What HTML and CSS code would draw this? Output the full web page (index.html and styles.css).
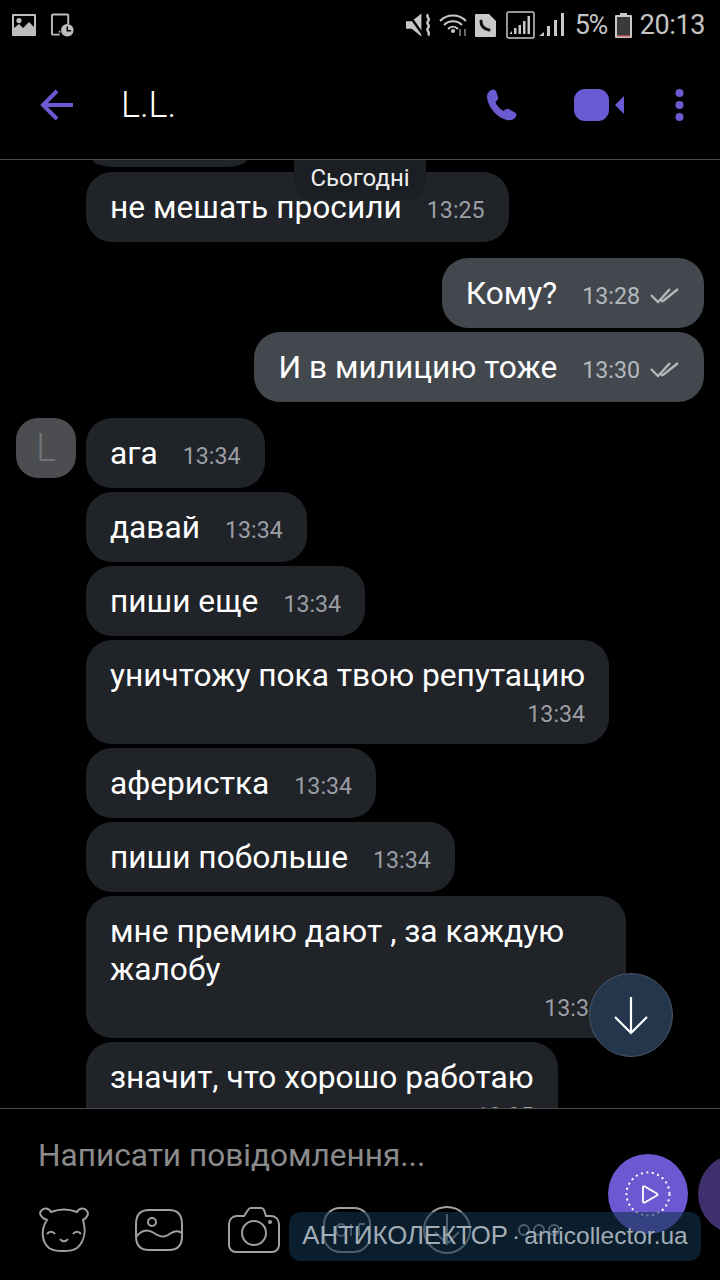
FILE: index.html
```html
<!DOCTYPE html>
<html lang="uk">
<head>
<meta charset="utf-8">
<title>L.L.</title>
<link rel="stylesheet" href="styles.css">
</head>
<body>
<div class="screen">
  <div class="status">
    <div class="status-left">
      <svg class="si-img" viewBox="0 0 24 22"><path fill="#bdbdbd" fill-rule="evenodd" d="M1 0h22a1 1 0 0 1 1 1v20a1 1 0 0 1-1 1H1a1 1 0 0 1-1-1V1a1 1 0 0 1 1-1zM2 2v12l5-4 4 4 6-6 5 5V2zM7 4a2.6 2.6 0 1 1 0 5.200a2.600 2.600 0 0 1 0-5.200z"/></svg>
      <svg class="si-tab" viewBox="0 0 24 24"><path fill="none" stroke="#bdbdbd" stroke-width="2" d="M9 22H2a1 1 0 0 1-1-1V2a1 1 0 0 1 1-1h15a1 1 0 0 1 1 1v9"/><circle cx="17" cy="17.500" r="6.500" fill="#bdbdbd"/><path fill="none" stroke="#000" stroke-width="1.500" d="M17 13.500v4.500h4"/><circle cx="9" cy="19" r="1" fill="#bdbdbd"/></svg>
    </div>
    <div class="status-right">
      <svg class="si-mute" viewBox="0 0 26 24"><path fill="#c8c8c8" d="M0 8h6L16 0v24L6 16H0z"/><path stroke="#000" stroke-width="2.500" d="M2 0l17 24"/><path fill="none" stroke="#c8c8c8" stroke-width="2.500" d="M23 1c-3 3 3 4 0 7s3 4 0 7 3 4 0 8"/></svg>
      <svg class="si-wifi" viewBox="0 0 30 24"><g fill="none" stroke="#c8c8c8" stroke-width="2"><path d="M1 8c7-7.500 19-7.500 26 0"/><path d="M5 12c5-5 13-5 18 0"/><path d="M9 16c3-3 7-3 10 0"/></g><circle cx="14" cy="18" r="2" fill="#c8c8c8"/><path stroke="#888" stroke-width="1.500" d="M21 16v7M26 16v7"/></svg>
      <svg class="si-doc" viewBox="0 0 21 23"><path fill="#c8c8c8" d="M1 0h13l7 7v15a1 1 0 0 1-1 1H1a1 1 0 0 1-1-1V1a1 1 0 0 1 1-1z"/><path fill="none" stroke="#111" stroke-width="3" stroke-linecap="round" d="M6 7c0 5 3 8 8 9"/></svg>
      <svg class="si-box" viewBox="0 0 29 28"><rect x="1" y="1" width="27" height="26" rx="1.500" fill="none" stroke="#c8c8c8" stroke-width="1.500"/><path fill="#c8c8c8" d="M4 22l2-2v3H4zM8 17h2.500v6H8zM12.500 14H15v9h-2.500zM17 10h2.500v13H17zM21.500 5H24v18h-2.500z"/></svg>
      <svg class="si-sig" viewBox="0 0 26 24"><path fill="#c8c8c8" d="M0 23l5-4v4zM8 13h3v10H8zM15 7h3v16h-3zM22 0h3v23h-3z"/></svg>
      <span class="st-pct">5%</span>
      <svg class="si-bat" viewBox="0 0 17 25"><path fill="#c8c8c8" d="M5 0h7v2h4a1 1 0 0 1 1 1v21a1 1 0 0 1-1 1H1a1 1 0 0 1-1-1V3a1 1 0 0 1 1-1h4z"/><rect x="2" y="4" width="13" height="19" fill="#3a3a3a"/><rect x="2" y="22" width="13" height="1.500" fill="#b04a4a"/></svg>
      <span class="st-time">20:13</span>
    </div>
  </div>

  <header class="head">
    <svg class="ic-back" viewBox="0 0 34 32"><path fill="none" stroke="#6b5bd2" stroke-width="4" d="M33 16H4M17 2L3 16l14 14"/></svg>
    <div class="title">L.L.</div>
    <svg class="ic-call" viewBox="0 0 32 32"><path fill="#6b5bd2" d="M5 1c2-1 4-.500 5 1l2 6c.500 1.500 0 2.500-1 3.500l-1.500 1.500c1 3.500 4 7 8 9l2-1.500c1-.800 2.500-1 3.500-.300l6 3.300c1.500 1 1.800 3 .800 4.300-1.500 2.500-4 3.800-7 3.500C12 30 2 19 1 8c-.200-3 1.500-5.500 4-7z"/></svg>
    <svg class="ic-video" viewBox="0 0 50 32"><rect width="35" height="32" rx="11" fill="#6b5bd2"/><path fill="#6b5bd2" d="M41 16l9-9v18z"/></svg>
    <svg class="ic-more" viewBox="0 0 9 32"><g fill="#6b5bd2"><circle cx="4.500" cy="4" r="4"/><circle cx="4.500" cy="16" r="4"/><circle cx="4.500" cy="28" r="4"/></g></svg>
  </header>

  <main class="chat">
    <div class="msgs">
      <div class="clip"></div>
      <div class="row in"><div class="b"><span class="t">не мешать просили</span><span class="m">13:25</span></div></div>
      <div class="row out first"><div class="b o"><span class="t">Кому?</span><span class="m">13:28</span><svg class="ticks" viewBox="0 0 30 16"><path fill="none" stroke="#b4b8bd" stroke-width="2.300" d="M1 7l7 7L20 1M13 13L28 1M11 12l2 2"/></svg></div></div>
      <div class="row out"><div class="b o"><span class="t">И в милицию тоже</span><span class="m">13:30</span><svg class="ticks" viewBox="0 0 30 16"><path fill="none" stroke="#b4b8bd" stroke-width="2.300" d="M1 7l7 7L20 1M13 13L28 1M11 12l2 2"/></svg></div></div>
      <div class="row av first"><div class="avatar">L</div><div class="b"><span class="t">ага</span><span class="m">13:34</span></div></div>
      <div class="row in"><div class="b"><span class="t">давай</span><span class="m">13:34</span></div></div>
      <div class="row in"><div class="b"><span class="t">пиши еще</span><span class="m">13:34</span></div></div>
      <div class="row in"><div class="b col"><span class="t">уничтожу пока твою репутацию</span><span class="m">13:34</span></div></div>
      <div class="row in"><div class="b"><span class="t">аферистка</span><span class="m">13:34</span></div></div>
      <div class="row in"><div class="b"><span class="t">пиши побольше</span><span class="m">13:34</span></div></div>
      <div class="row in"><div class="b col w540"><span class="t">мне премию дают , за каждую жалобу</span><span class="m">13:34</span></div></div>
      <div class="row in"><div class="b col"><span class="t">значит, что хорошо работаю</span><span class="m">13:35</span></div></div>
    </div>
    <div class="date">Сьогодні</div>
    <div class="down"><svg viewBox="0 0 36 40"><path fill="none" stroke="#fff" stroke-width="2.200" d="M18 1v36M2 21l16 16 16-16"/></svg></div>
  </main>

  <footer class="composer">
    <div class="ph">Написати повідомлення...</div>
    <div class="tools">
      <svg class="tool t1" viewBox="0 0 52 46"><g fill="none" stroke="#a0a0a0" stroke-width="2"><path d="M9 13C3 11 0 6 4 3c3-3 8-1 9 2 8-3 18-3 26 0 1-3 6-5 9-2 4 3 1 8-3 10 3 10 2 21-6 28-6 4-22 4-28 0C3 34 3 22 9 13z"/><path d="M9 27c2-3 6-3 8 0M35 27c2-3 6-3 8 0M22 32c2 3 6 3 8 0"/></g></svg>
      <svg class="tool t2" viewBox="0 0 48 42"><g fill="none" stroke="#a0a0a0" stroke-width="2"><path d="M14 1h20c9 0 13 5 13 14v12c0 9-4 14-13 14H14C5 41 1 36 1 27V15C1 6 5 1 14 1z"/><circle cx="17" cy="13" r="4"/><path d="M1 28c6-8 12-8 18-4s10 5 14 2 9-6 14-2"/></g></svg>
      <svg class="tool t3" viewBox="0 0 52 46"><g fill="none" stroke="#a0a0a0" stroke-width="2"><path d="M9 9h7l4-6c.500-1 1.500-2 3-2h10c1.500 0 2.500 1 3 2l2 6h5c4 0 8 3 8 8v21c0 4-3 7-7 7H8c-4 0-7-3-7-7V17c0-5 4-8 8-8z"/><circle cx="26" cy="26" r="12"/></g><circle cx="42" cy="15" r="2" fill="#a0a0a0"/></svg>
      <svg class="tool t4" viewBox="0 0 48 46"><rect x="1" y="1" width="46" height="44" rx="16" fill="none" stroke="#a0a0a0" stroke-width="2"/><path fill="none" stroke="#a0a0a0" stroke-width="1.800" d="M18 17a5 6 0 1 0 0 12a5 6 0 1 0 0-12M28 17v12M36 17v12M36 17h6"/></svg>
      <svg class="tool t5" viewBox="0 0 48 48"><circle cx="24" cy="24" r="23" fill="none" stroke="#a0a0a0" stroke-width="2"/><path fill="none" stroke="#a0a0a0" stroke-width="2" d="M24 8v30M12 26l12 12 12-12"/></svg>
      <svg class="tool t6" viewBox="0 0 42 12"><g fill="none" stroke="#a0a0a0" stroke-width="2"><circle cx="6" cy="6" r="5"/><circle cx="21" cy="6" r="5"/><circle cx="36" cy="6" r="5"/></g></svg>
    </div>
    <div class="send"><svg viewBox="0 0 46 46"><circle cx="23" cy="23" r="21.500" fill="none" stroke="#fff" stroke-width="2" stroke-dasharray="2 3.500"/><path fill="none" stroke="#fff" stroke-width="1.800" stroke-linejoin="round" d="M18 15.500v15c0 1 .800 1.500 1.800 1l12-7c1-.500 1-1.500 0-2l-12-7c-1-.500-1.800 0-1.800 1z"/></svg></div>
    <div class="send2"></div>
    <div class="mark"><span class="mark-a">АНТИКОЛЕКТОР</span> · <span class="mark-b">anticollector.ua</span></div>
  </footer>
</div>
</body>
</html>
```
FILE: styles.css
```css
* { box-sizing: border-box; }
html, body { margin: 0; padding: 0; background: #000; }
body { font-family: Roboto, "Noto Sans", sans-serif; color: #fff; }
.screen { width: 720px; height: 1280px; display: flex; flex-direction: column; overflow: hidden; background: #000; }

.status { height: 50px; display: flex; justify-content: space-between; align-items: center; padding: 0 15px 0 12px; flex: none; }
.status-left, .status-right { display: flex; align-items: center; }
.si-img { width: 24px; height: 22px; }
.si-tab { width: 23px; height: 24px; margin-left: 15px; }
.si-mute { width: 25px; height: 24px; }
.si-wifi { width: 30px; height: 24px; margin-left: 8px; }
.si-doc { width: 21px; height: 23px; margin-left: 6px; }
.si-box { width: 29px; height: 28px; margin-left: 10px; }
.si-sig { width: 26px; height: 24px; margin-left: 4px; }
.st-pct { font-size: 27px; color: #c4c4c4; margin-left: 10px; letter-spacing: -1.5px; }
.si-bat { width: 17px; height: 25px; margin-left: 8px; }
.st-time { font-size: 27px; color: #c4c4c4; margin-left: 8px; letter-spacing: -.4px; }

.head { height: 110px; flex: none; display: flex; align-items: center; border-bottom: 1px solid #4a4a4a; padding: 0 0 0 40px; }
.ic-back { width: 34px; height: 32px; }
.title { font-size: 36px; font-weight: 300; margin-left: 47px; flex: 1; }
.ic-call { width: 32px; height: 32px; }
.ic-video { width: 50px; height: 32px; margin-left: 56px; }
.ic-more { width: 9px; height: 32px; margin-left: 51px; margin-right: 36px; }

.chat { flex: 1; min-height: 0; position: relative; overflow: hidden; }
.msgs { display: flex; flex-direction: column; gap: 4px; }
.clip { width: 154px; height: 7px; margin-left: 93px; background: #202328; border-radius: 0 0 24px 24px / 0 0 7px 7px; margin-bottom: 1px; }
.row { display: flex; flex: none; }
.row.in { padding-left: 86px; }
.row.out { justify-content: flex-end; padding-right: 16px; }
.row.av { padding-left: 16px; gap: 10px; align-items: flex-start; }
.row.first { margin-top: 12px; }
.b { background: #202328; border-radius: 26px; padding: 17px 24px 15px; display: flex; align-items: center; gap: 25px; font-size: 31.700px; line-height: 38px; }
.b.o { background: #43484f; }
.b.col { display: block; }
.b.col .m { display: block; text-align: right; line-height: 29px; padding-top: 5px; }
.w540 { width: 540px; }
.t { color: #fff; }
.m { font-size: 23.200px; line-height: 30px; padding-top: 4px; color: #9a9ea4; }
.o .m { color: #b4b8bd; }
.ticks { width: 30px; height: 16px; margin-left: -15px; margin-top: 3px; }
.avatar { width: 60px; height: 60px; border-radius: 22px; background: #4b4d51; color: #6f7276; font-size: 38px; font-weight: 300; display: flex; align-items: center; justify-content: center; }

.date { position: absolute; top: 0; left: 294px; width: 132px; height: 40px; background: #1b1e22; border-radius: 0 0 20px 20px; text-align: center; font-size: 24px; line-height: 36px; color: #eee; }
.down { position: absolute; left: 589px; top: 813px; width: 84px; height: 84px; border-radius: 50%; background: #24364c; border: 1px solid #46566a; display: flex; align-items: center; justify-content: center; }
.down svg { width: 36px; height: 40px; margin-top: 2px; }

.composer { height: 172px; flex: none; border-top: 1px solid #4a4a4a; position: relative; padding: 27px 0 0 38px; }
.ph { font-size: 31.600px; line-height: 40px; color: #8b8b8b; }
.tools { display: flex; align-items: center; margin-top: 29px; height: 50px; }
.tool { flex: none; }
.t1 { width: 52px; height: 46px; }
.t2 { width: 48px; height: 42px; margin-left: 45px; }
.t3 { width: 52px; height: 46px; margin-left: 45px; }
.t4 { width: 48px; height: 46px; margin-left: 43px; }
.t5 { width: 48px; height: 48px; margin-left: 52px; }
.t6 { width: 42px; height: 12px; margin-left: 47px; }
.send { position: absolute; left: 608px; top: 45px; width: 80px; height: 80px; border-radius: 50%; background: #6a59d1; display: flex; align-items: center; justify-content: center; }
.send svg { width: 46px; height: 46px; }
.send2 { position: absolute; left: 698px; top: 45px; width: 80px; height: 80px; border-radius: 50%; background: #3f2f6c; }
.mark { position: absolute; left: 289px; top: 103px; width: 412px; height: 49px; border-radius: 12px; background: rgba(16, 50, 76, .6); font-family: "Liberation Sans", Arial, sans-serif; font-size: 24px; line-height: 47px; text-align: center; color: #a3adb5; white-space: nowrap; word-spacing: -2.500px; }
.mark-a { font-size: 25.800px; }
.mark-b { font-size: 24.500px; }
```
